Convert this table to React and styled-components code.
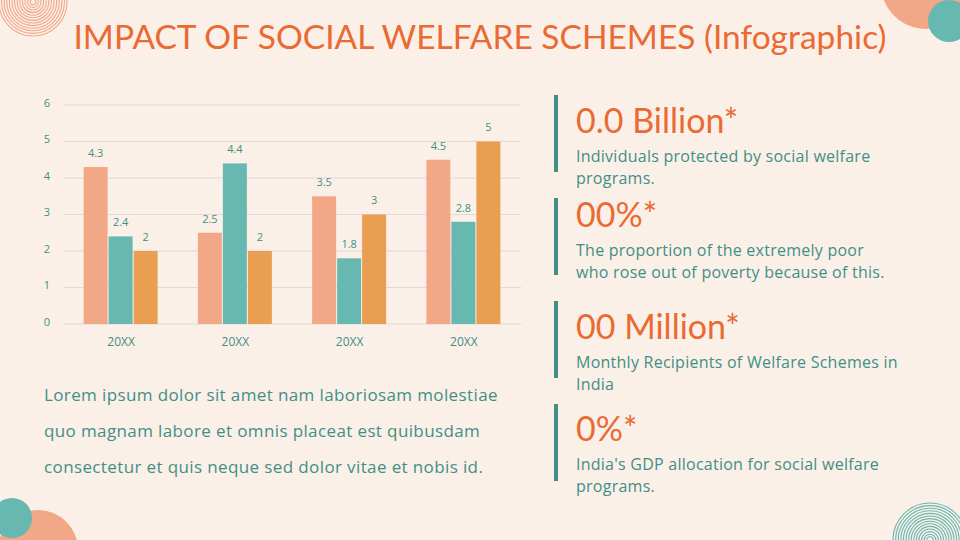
import React from "react";
import styled, { createGlobalStyle } from "styled-components";

const GlobalStyle = createGlobalStyle`
  html, body { margin: 0; padding: 0; background: #fbf0e8; }
  * { box-sizing: border-box; }
`;

const C = {
  bg: "#fbf0e8",
  orange: "#ea6a33",
  teal: "#418f87",
  salmon: "#f2a787",
  barTeal: "#66b8b0",
  barOrange: "#e99e52",
  grid: "#dedad5",
};

const bodyFont = `"Open Sans", "Noto Sans", sans-serif`;

const Page = styled.div`
  position: relative;
  width: 960px;
  height: 540px;
  overflow: hidden;
  background: ${C.bg};
  font-family: ${bodyFont};
  color: ${C.teal};
`;

const Title = styled.h1`
  margin: 0;
  padding-top: 15px;
  font-family: Lato, "Noto Sans", sans-serif;
  font-size: 33.5px;
  line-height: 42px;
  font-weight: 400;
  text-align: center;
  color: ${C.orange};
  white-space: nowrap;
`;

const Body = styled.div`
  display: flex;
  padding-top: 38px;
`;

const LeftCol = styled.div`
  width: 530px;
  padding-left: 30px;
  display: flex;
  flex-direction: column;
`;

const ChartSvg = styled.svg`
  display: block;
  width: 500px;
  height: 260px;
  font-family: ${bodyFont};
`;

const Paragraph = styled.p`
  margin: 22px 0 0 14px;
  width: 475px;
  font-size: 17px;
  letter-spacing: 0.38px;
  line-height: 36px;
  color: ${C.teal};
`;

const RightCol = styled.div`
  display: flex;
  flex-direction: column;
  padding-left: 24px;
`;

const StatItem = styled.div`
  display: flex;
  gap: 18px;
  height: 103px;
`;

const Bar = styled.div`
  flex-shrink: 0;
  width: 4px;
  height: 77px;
  background: ${C.teal};
`;

const StatText = styled.div`
  margin-top: ${(p) => p.$offset}px;
`;

const Headline = styled.div`
  font-family: Lato, "Noto Sans", sans-serif;
  font-size: 34px;
  line-height: 34px;
  color: ${C.orange};
  white-space: nowrap;
`;

const Desc = styled.div`
  margin-top: 8px;
  font-size: 16px;
  letter-spacing: 0.25px;
  line-height: 22px;
  color: ${C.teal};
  width: ${(p) => p.$width}px;
`;

const Corner = styled.svg`
  position: absolute;
  display: block;
  top: ${(p) => (p.$top !== undefined ? `${p.$top}px` : "auto")};
  bottom: ${(p) => (p.$bottom !== undefined ? `${p.$bottom}px` : "auto")};
  left: ${(p) => (p.$left !== undefined ? `${p.$left}px` : "auto")};
  right: ${(p) => (p.$right !== undefined ? `${p.$right}px` : "auto")};
`;

const data = [
  [4.3, 2.4, 2],
  [2.5, 4.4, 2],
  [3.5, 1.8, 3],
  [4.5, 2.8, 5],
];
const barColors = [C.salmon, C.barTeal, C.barOrange];

function Chart() {
  const x0 = 34;
  const x1 = 491;
  const yZero = 229;
  const unit = 36.5;
  const cat = (x1 - x0) / 4;
  return (
    <ChartSvg viewBox="0 0 500 260">
      {[0, 1, 2, 3, 4, 5, 6].map((v) => {
        const y = yZero - v * unit;
        return (
          <g key={v}>
            <line x1={x0} x2={x1} y1={y} y2={y} stroke={C.grid} strokeWidth="1.2" />
            <text x="17" y={y - 1} fontSize="11" fill={C.teal} textAnchor="middle" dominantBaseline="middle">
              {v}
            </text>
          </g>
        );
      })}
      {data.map((group, gi) => {
        const c = x0 + cat * (gi + 0.5);
        return (
          <g key={gi}>
            {group.map((v, bi) => {
              const bx = c - 37.5 + bi * 25;
              const h = v * unit;
              return (
                <g key={bi}>
                  <rect x={bx} y={yZero - h} width="24" height={h} fill={barColors[bi]} />
                  <text x={bx + 12} y={yZero - h - 13} fontSize="11" fill={C.teal} textAnchor="middle" dominantBaseline="middle">
                    {v}
                  </text>
                </g>
              );
            })}
            <text x={c} y="248" fontSize="12" fill={C.teal} textAnchor="middle" dominantBaseline="middle">
              20XX
            </text>
          </g>
        );
      })}
    </ChartSvg>
  );
}

function Rings({ cx, cy, color, max }) {
  const radii = [];
  for (let r = max; r > 1; r -= 2.6) radii.push(r);
  return radii.map((r) => <circle key={r} cx={cx} cy={cy} r={r} fill="none" stroke={color} strokeWidth="1.1" />);
}

const stats = [
  { head: "0.0 Billion*", desc: "Individuals protected by social welfare programs.", offset: 8, width: 340 },
  { head: "00%*", desc: "The proportion of the extremely poor who rose out of poverty because of this.", offset: -1, width: 315 },
  { head: "00 Million*", desc: "Monthly Recipients of Welfare Schemes in India", offset: 8, width: 340 },
  { head: "0%*", desc: "India's GDP allocation for social welfare programs.", offset: 7, width: 340 },
];

export default function App() {
  return (
    <>
      <GlobalStyle />
      <Page>
        <Corner $top={0} $left={0} width="80" height="45" viewBox="0 0 80 45">
          <Rings cx={33} cy={2} color={C.salmon} max={34} />
        </Corner>
        <Corner $top={0} $right={0} width="90" height="50" viewBox="870 0 90 50">
          <circle cx="926" cy="-16" r="45" fill={C.salmon} />
          <circle cx="949" cy="21" r="21" fill={C.barTeal} />
        </Corner>
        <Corner $bottom={0} $left={0} width="90" height="50" viewBox="0 490 90 50">
          <circle cx="38" cy="550" r="40" fill={C.salmon} />
          <circle cx="12" cy="518" r="20" fill={C.barTeal} />
        </Corner>
        <Corner $bottom={0} $right={0} width="80" height="45" viewBox="880 495 80 45">
          <Rings cx={930} cy={540} color={C.barTeal} max={37} />
        </Corner>

        <Title>IMPACT OF SOCIAL WELFARE SCHEMES (Infographic)</Title>
        <Body>
          <LeftCol>
            <Chart />
            <Paragraph>
              Lorem ipsum dolor sit amet nam laboriosam molestiae quo magnam labore et omnis placeat est quibusdam
              consectetur et quis neque sed dolor vitae et nobis id.
            </Paragraph>
          </LeftCol>
          <RightCol>
            {stats.map((s) => (
              <StatItem key={s.head}>
                <Bar />
                <StatText $offset={s.offset}>
                  <Headline>{s.head}</Headline>
                  <Desc $width={s.width}>{s.desc}</Desc>
                </StatText>
              </StatItem>
            ))}
          </RightCol>
        </Body>
      </Page>
    </>
  );
}
